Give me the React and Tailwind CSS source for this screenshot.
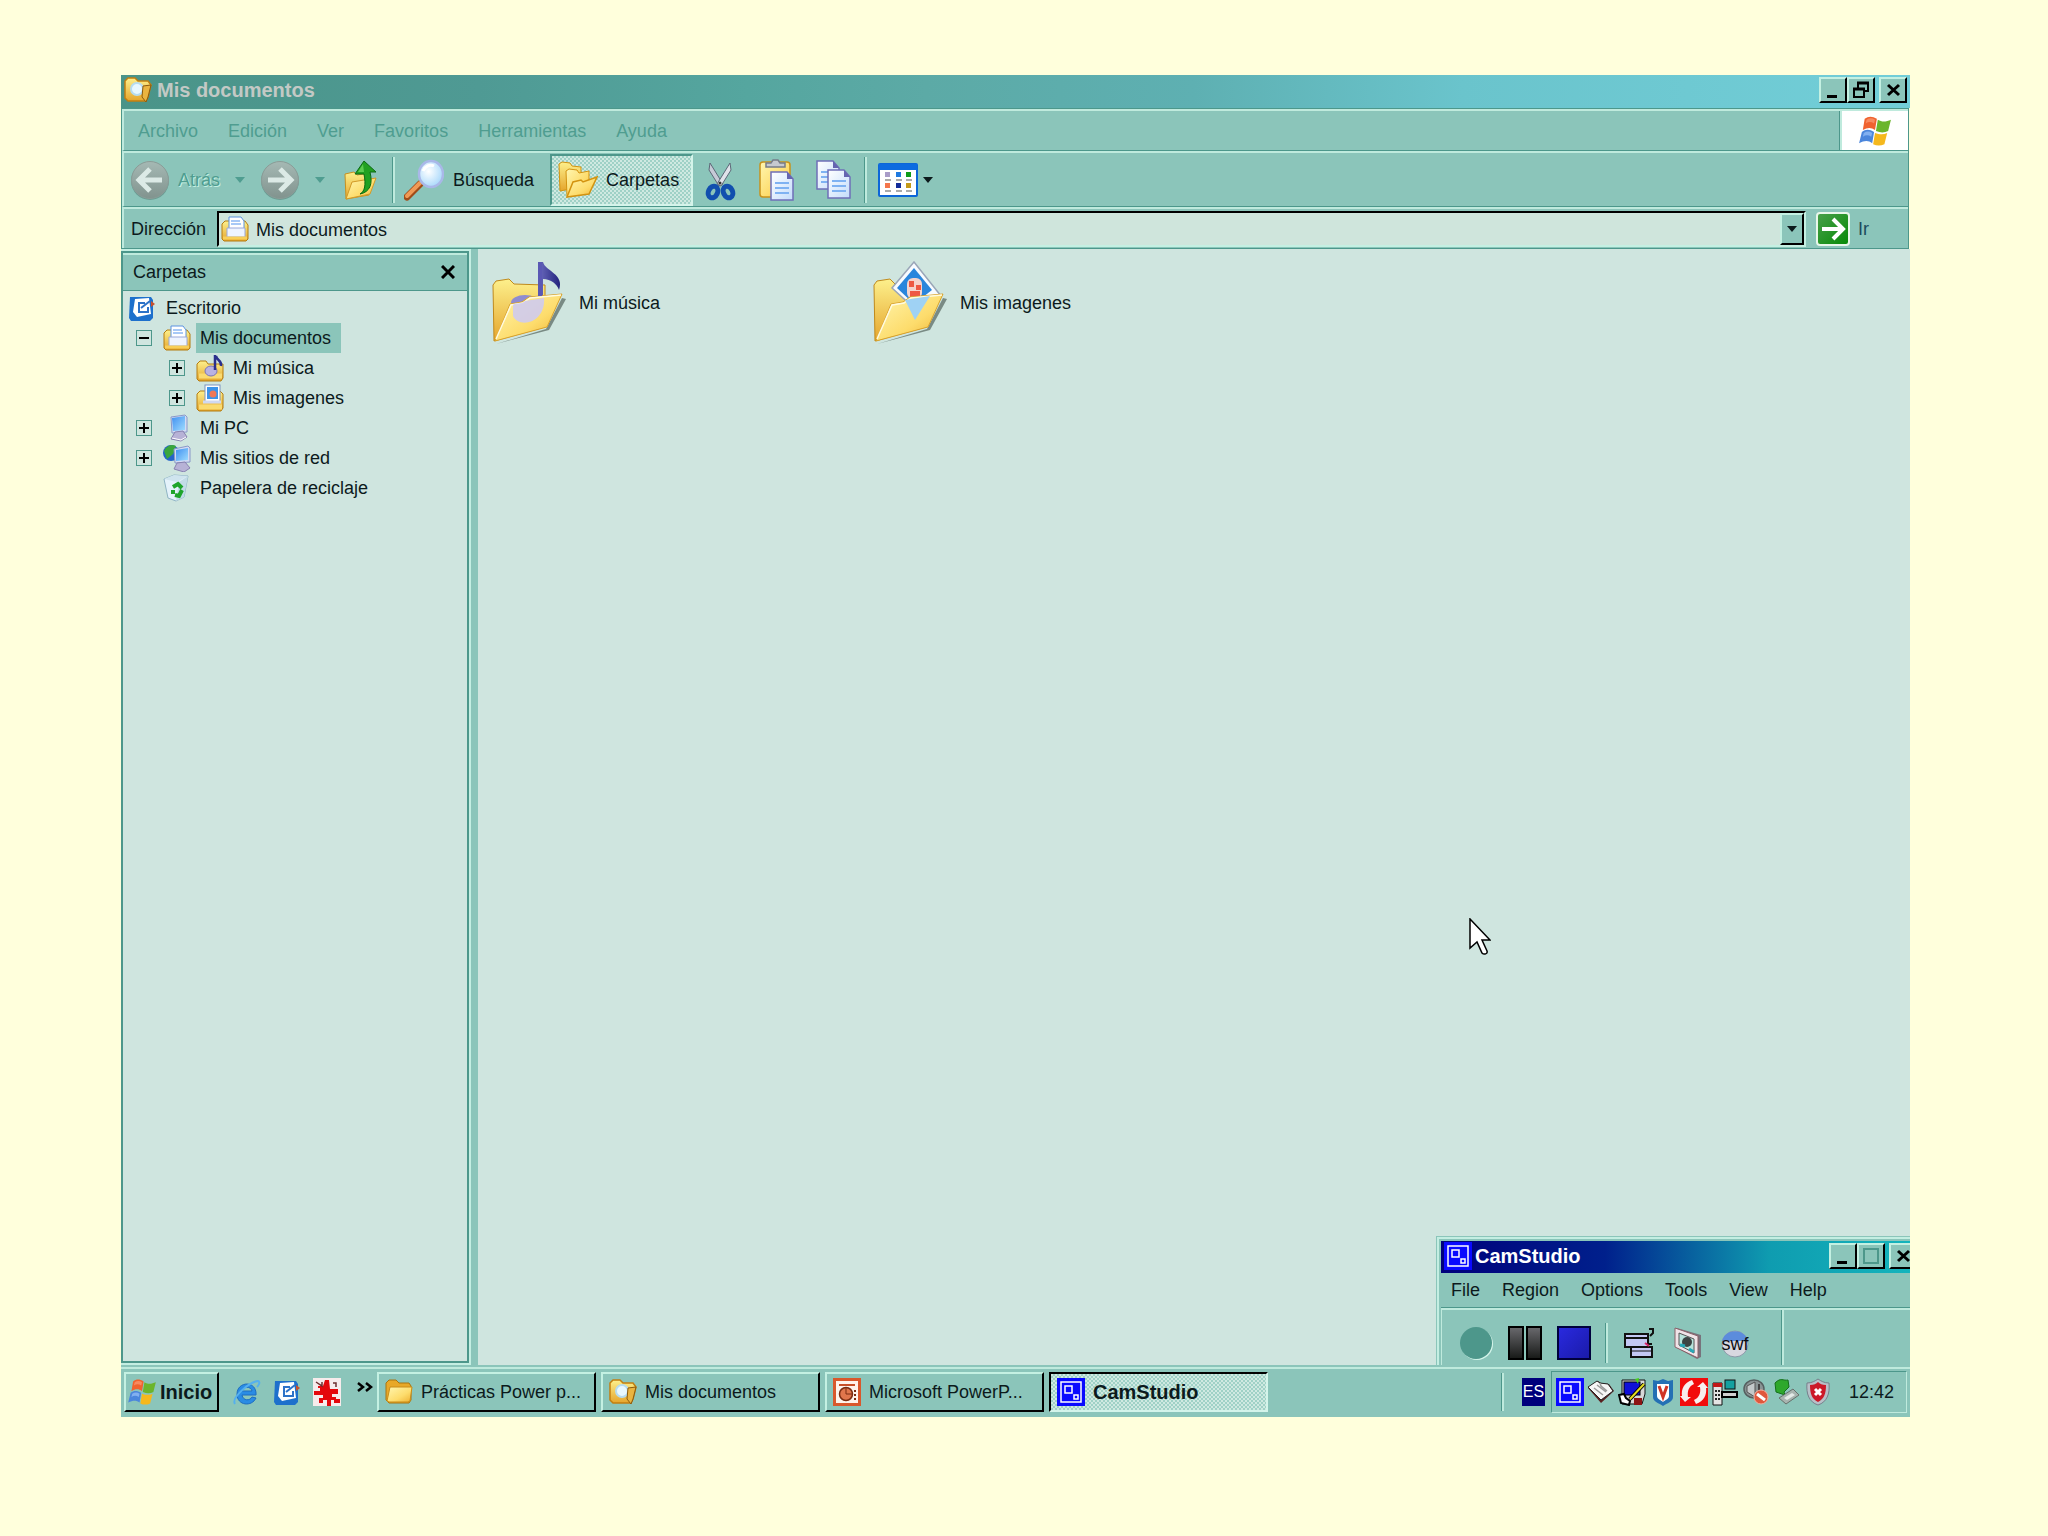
import React, { useState } from "react";

// Shared paint used by every icon on the page
const SharedDefs = () => (
  <svg width="0" height="0" className="absolute" aria-hidden="true">
    <defs>
      <linearGradient id="folder" x1="0" y1="0" x2="1" y2="1">
        <stop offset="0" stopColor="#fff6b0" />
        <stop offset="0.6" stopColor="#fddc6c" />
        <stop offset="1" stopColor="#eeb030" />
      </linearGradient>
      <linearGradient id="folderBack" x1="0" y1="0" x2="0" y2="1">
        <stop offset="0" stopColor="#fdf08c" />
        <stop offset="1" stopColor="#e5a52c" />
      </linearGradient>
      <linearGradient id="screen" x1="0" y1="0" x2="1" y2="1">
        <stop offset="0" stopColor="#3f8ff0" />
        <stop offset="1" stopColor="#9fdcff" />
      </linearGradient>
      <linearGradient id="paper" x1="0" y1="0" x2="1" y2="1">
        <stop offset="0" stopColor="#ffffff" />
        <stop offset="1" stopColor="#c3dcfb" />
      </linearGradient>
      <linearGradient id="grey" x1="0" y1="0" x2="0" y2="1">
        <stop offset="0" stopColor="#a5b9b4" />
        <stop offset="1" stopColor="#81938e" />
      </linearGradient>
      <linearGradient id="go" x1="0" y1="0" x2="1" y2="1">
        <stop offset="0" stopColor="#4aa04c" />
        <stop offset="1" stopColor="#058a05" />
      </linearGradient>
      <linearGradient id="pause" x1="0" y1="0" x2="0" y2="1">
        <stop offset="0" stopColor="#6a6a6e" />
        <stop offset="1" stopColor="#161816" />
      </linearGradient>
      <linearGradient id="stop" x1="0" y1="0" x2="1" y2="1">
        <stop offset="0" stopColor="#2a2ae0" />
        <stop offset="1" stopColor="#1a1aa8" />
      </linearGradient>
      <radialGradient id="lens" cx="0.4" cy="0.4" r="0.7">
        <stop offset="0" stopColor="#ffffff" />
        <stop offset="1" stopColor="#9fd4fa" />
      </radialGradient>
      <linearGradient id="note" x1="0" y1="0" x2="1" y2="0">
        <stop offset="0" stopColor="#6c6cc0" />
        <stop offset="1" stopColor="#23237c" />
      </linearGradient>
    </defs>
  </svg>
);

const Flag = ({ className }) => (
  <svg viewBox="0 0 34 32" className={className}>
    <path d="M6 3c4-3 8-3 13 0l-2 12c-4-3-8-3-13 0z" fill="#f0622f" />
    <path d="M20 4c5 3 9 2 14 0l-3 12c-4 2-8 2-13 0z" fill="#6bb52c" />
    <path d="M3 17c4-3 8-3 13 0l-2 12C10 26 6 26 0 29z" fill="#4b86dc" />
    <path d="M17 18c5 2 9 2 13 0l-3 12c-4 2-8 2-12 0z" fill="#f5b81d" />
    <path d="M8 4c3-2 6-2 9 0l-1 4c-3-2-6-2-9 0z" fill="#f78a60" />
    <path d="M5 18c3-2 6-2 9 0l-1 4c-3-2-6-2-9 0z" fill="#82b0f0" />
  </svg>
);

const NavCircle = ({ back }) => (
  <svg viewBox="0 0 40 40" className="size-10">
    <circle cx="20" cy="21" r="19" fill="#6d9c93" />
    <circle cx="20" cy="20" r="18.5" fill="url(#grey)" stroke="#8b9c97" />
    <path
      d={back ? "M32 20H10M20 9L9 20l11 11" : "M8 20h22M20 9l11 11-11 11"}
      fill="none"
      stroke="#dceae6"
      strokeWidth="5"
    />
  </svg>
);

const Caret = ({ className }) => (
  <svg viewBox="0 0 12 8" className={className}>
    <path d="M1 1h10L6 7z" fill="currentColor" />
  </svg>
);

const FolderUp = () => (
  <svg viewBox="0 0 34 42" className="h-[42px] w-[34px]">
    <path d="M1 15l9-2 3 3 12-2v22L2 40z" fill="url(#folderBack)" stroke="#c89020" />
    <path d="M2 40l6-17 24-4-6 16z" fill="url(#folder)" stroke="#d29a28" />
    <path d="M16 35c5-3 6-9 4-20h-9L20 2l12 11h-6c3 12 0 20-10 22z" fill="#21a121" stroke="#0b6b12" />
    <path d="M19 5l-5 8h6z" fill="#5ccc50" />
  </svg>
);

const SearchIcon = () => (
  <svg viewBox="0 0 40 42" className="h-[42px] w-10">
    <path d="M3 38L16 25" stroke="#a04c18" strokeWidth="7" strokeLinecap="round" />
    <path d="M3 37L16 24" stroke="#f09a55" strokeWidth="4" strokeLinecap="round" />
    <ellipse cx="27" cy="15" rx="12" ry="13" fill="url(#lens)" stroke="#a9b8e8" strokeWidth="2.5" />
    <path d="M19 12c2-5 7-7 11-5" stroke="#fff" strokeWidth="3" fill="none" />
  </svg>
);

const FoldersIcon = () => (
  <svg viewBox="0 0 40 38" className="h-[38px] w-10">
    <path d="M1 3l3-2 8 1 2 3 9 1v20L2 30z" fill="url(#folderBack)" stroke="#d39310" />
    <path d="M8 10l3-2 8 1 2 3 10-2v20L9 35z" fill="url(#folder)" stroke="#d39310" />
    <path d="M9 36l6-15 8-2 2 2 14-5-8 17z" fill="url(#folder)" stroke="#d39310" strokeWidth="1.5" />
  </svg>
);

const CutIcon = () => (
  <svg viewBox="0 0 38 42" className="h-[42px] w-[38px]">
    <path d="M9 4l13 21-4 2L8 11z" fill="#c6cad6" stroke="#5d6878" />
    <path d="M29 4L16 25l4 2 10-16z" fill="#e0e3ea" stroke="#5d6878" />
    <ellipse cx="12" cy="33" rx="4.5" ry="6" transform="rotate(25 12 33)" fill="none" stroke="#114fae" strokeWidth="5" />
    <ellipse cx="27" cy="33" rx="4.5" ry="6" transform="rotate(-25 27 33)" fill="none" stroke="#114fae" strokeWidth="5" />
    <circle cx="19" cy="24" r="1.5" fill="#333" />
  </svg>
);

const Sheet = ({ x, y }) => (
  <g transform={`translate(${x} ${y})`}>
    <path d="M1 1h16l6 7v21H1z" fill="url(#paper)" stroke="#6f6fb8" strokeWidth="1.5" />
    <path d="M17 1v7h6z" fill="#6565b0" />
    <path d="M5 12h14M5 17h14M5 22h14" stroke="#7fb2f2" strokeWidth="2" />
  </g>
);

const PasteIcon = () => (
  <svg viewBox="0 0 38 42" className="h-[42px] w-[38px]">
    <rect x="2" y="3" width="30" height="35" rx="3" fill="url(#folder)" stroke="#c8921c" strokeWidth="1.5" />
    <path d="M8 8V4h5l2-3h5l2 3h5v4z" fill="#c6c9cf" stroke="#777c88" strokeWidth="1.5" />
    <Sheet x={12} y={12} />
  </svg>
);

const CopyIcon = () => (
  <svg viewBox="0 0 38 42" className="h-[42px] w-[38px]">
    <Sheet x={1} y={1} />
    <Sheet x={12} y={10} />
  </svg>
);

const ViewsIcon = () => (
  <svg viewBox="0 0 40 34" className="h-[34px] w-10">
    <rect x="1" y="1" width="38" height="32" rx="1" fill="#fff" stroke="#0c66d8" strokeWidth="2" />
    <rect x="1" y="1" width="38" height="6" fill="#0d6be0" />
    <rect x="7" y="9" width="5" height="5" fill="#a99cc8" />
    <rect x="18" y="9" width="5" height="5" fill="#1f7ae0" />
    <rect x="28" y="9" width="5" height="5" fill="#0f9c18" />
    <rect x="7" y="20" width="5" height="5" fill="#f4764c" />
    <rect x="18" y="20" width="5" height="5" fill="#132c9a" />
    <rect x="28" y="20" width="5" height="5" fill="#c49a18" />
    <path d="M7 17h6M18 17h6M28 17h6M7 28h6M18 28h6M28 28h6" stroke="#aaa" strokeWidth="2" />
  </svg>
);

const GoIcon = () => (
  <svg viewBox="0 0 34 34" className="size-[34px]">
    <rect x="1" y="1" width="32" height="32" rx="3" fill="url(#go)" stroke="#e8f6ea" strokeWidth="2" />
    <path d="M6 17h20M17 7l10 10-10 10" fill="none" stroke="#fff" strokeWidth="4" />
  </svg>
);

const DocsIcon = ({ className }) => (
  <svg viewBox="0 0 28 26" className={className}>
    <path d="M1 8l3-3h20l3 4v14l-2 2H3l-2-2z" fill="url(#folderBack)" stroke="#b47c10" />
    <path d="M8 1h12l3 4v12H8z" fill="#fff" stroke="#5b92e0" />
    <path d="M10 5h9M10 8h10" stroke="#8cb8f4" strokeWidth="1.5" />
    <path d="M6 12h18v9H6z" fill="#eef4ff" stroke="#9aa8d8" />
    <path d="M2 22h24" stroke="#f8cf58" strokeWidth="3" />
  </svg>
);

const DesktopIcon = ({ className }) => (
  <svg viewBox="0 0 28 26" className={className}>
    <path d="M2 2h21l2 3v18l-3 3H3l-2-3z" fill="#1d70cc" />
    <path d="M7 4l14-1 2 16-14 3-4-5z" fill="#fff" />
    <path d="M17 8h-6v9h9v-5M13 13l9-7" fill="none" stroke="#2c72c8" strokeWidth="2" />
    <path d="M23 6l4 3-4 3z" fill="#c8502c" />
  </svg>
);

const SmallMusic = () => (
  <svg viewBox="0 0 28 28" className="h-7 w-7">
    <path d="M1 10l3-3h6l2 3h15v14l-2 3H3l-2-2z" fill="url(#folderBack)" stroke="#b47c10" />
    <path d="M3 22h23" stroke="#fadb70" strokeWidth="5" />
    <ellipse cx="15" cy="17" rx="6" ry="5" fill="#b9b2e2" stroke="#7a74b8" />
    <path d="M19 1v15M20 2c1 5 6 4 5 10" stroke="#2b2f8c" strokeWidth="2.5" fill="none" />
  </svg>
);

const SmallImages = () => (
  <svg viewBox="0 0 28 28" className="h-7 w-7">
    <path d="M1 10l3-3h20l3 3v14l-2 3H3l-2-2z" fill="url(#folderBack)" stroke="#b47c10" />
    <rect x="9" y="1" width="15" height="17" fill="#fff" stroke="#7d93c0" />
    <rect x="11" y="3" width="11" height="12" fill="#3b94ea" />
    <circle cx="17" cy="10" r="3.5" fill="#f07858" />
    <path d="M7 18h18" stroke="#d0d8f0" strokeWidth="3" />
    <path d="M3 23h23" stroke="#fadb70" strokeWidth="5" />
  </svg>
);

const PcIcon = () => (
  <svg viewBox="0 0 28 28" className="h-7 w-7">
    <path d="M8 3l14-2 2 2v15l-15 1z" fill="#d4dcf4" stroke="#8a98c8" />
    <path d="M9 4l13-2v14l-12 1z" fill="url(#screen)" />
    <path d="M12 18l8-1 4 6-6 4-10-2z" fill="#b7b2d6" stroke="#8882b0" />
    <path d="M9 24l9 2 5-3" stroke="#fff" fill="none" />
  </svg>
);

const NetworkIcon = () => (
  <svg viewBox="0 0 28 28" className="h-7 w-7">
    <circle cx="8" cy="9" r="8" fill="#2464c8" />
    <path d="M1 7c3-6 8-7 12-5l-3 8-6 5z" fill="#3aa63c" />
    <path d="M11 5l14-3 2 2v14l-15 1z" fill="#d4dcf4" stroke="#8a98c8" />
    <path d="M13 6l12-2v12l-12 1z" fill="url(#screen)" />
    <path d="M14 19l8-1 5 6-6 4-10-3z" fill="#b7b2d6" stroke="#8882b0" />
  </svg>
);

const BinIcon = () => (
  <svg viewBox="0 0 28 28" className="h-7 w-7">
    <path d="M1 5l10-4 14 1-4 21-8 4-8-3z" fill="#e4f2fa" stroke="#8fb4c4" />
    <path d="M1 5l13 3 11-6-14-1z" fill="#cfe4ee" />
    <path d="M16 8l9-6-4 21-8 4z" fill="#c2dce6" />
    <path d="M10 13l5-3 4 4M19 16l-3 6-4-1M10 20v-4" stroke="#1fa52a" strokeWidth="4" fill="none" />
  </svg>
);

const BigFolder = ({ children, overlay }) => (
  <svg viewBox="0 0 76 84" className="h-[84px] w-[76px]">
    <path d="M5 83l53-14L75 38l-4-1-16 31z" fill="#54645c" opacity="0.7" />
    <path d="M2 24l3-4 13-2 5 5 31 1v42L3 80z" fill="url(#folderBack)" stroke="#c08a1c" />
    {children}
    <path d="M4 80l15-37 12-2 7-5 33-3-15 33z" fill="url(#folder)" stroke="#d8a22c" />
    <path d="M5 78l15-34 12-2 7-5 31-3" fill="none" stroke="#fffbe0" strokeWidth="1.5" />
    {overlay}
  </svg>
);

const MusicFolder = () => (
  <BigFolder
    overlay={
      <>
        <path d="M22 44c2-3 8 0 12-4l19-3c2 25-25 31-31 18z" fill="#cfcbee" opacity="0.9" />
        <path d="M47 1h4v34h-4z" fill="#5a58b4" />
      </>
    }
  >
    <ellipse cx="34" cy="42" rx="14" ry="8" fill="#8f8cd0" />
    <path d="M47 1h5c2 9 22 12 16 28-2-6-8-11-16-11v18h-5z" fill="url(#note)" />
  </BigFolder>
);

const ImagesFolder = () => (
  <BigFolder overlay={<path d="M33 39l25-4-15 24z" fill="#9fd2f4" />}>
    <path d="M42 1l27 34-27 12-22-20z" fill="#f8fbff" stroke="#9aa6b8" strokeWidth="1.5" />
    <path d="M42 7l18 22-18 14-17-16z" fill="#2a86dc" />
    <rect x="35" y="17" width="15" height="21" rx="6" fill="#f6d4cc" />
    <path d="M37 20h5v6h-5zM44 24h5v5h-5zM38 30h10v7H38z" fill="#ee5a44" />
  </BigFolder>
);

const SearchFolder = ({ className }) => (
  <svg viewBox="0 0 28 26" className={className}>
    <path d="M1 4l3-3h7l3 3h10l3 4-3 12-2 4H4l-3-3z" fill="url(#folderBack)" stroke="#c27f10" strokeWidth="1.5" />
    <circle cx="13" cy="12" r="6" fill="#e8f8ff" stroke="#b6dcf0" strokeWidth="2" />
    <path d="M19 9l8-1-3 12-2 5-4-5z" fill="#eab440" stroke="#8c5a0c" />
  </svg>
);

const PlainFolder = () => (
  <svg viewBox="0 0 28 26" className="h-[26px] w-7">
    <path d="M1 4l3-3h7l3 3h10l2 3v14l-2 3H4l-3-3z" fill="#e8a828" stroke="#a87410" />
    <path d="M2 22l3-14h22l-2 14-2 1H4z" fill="url(#folder)" stroke="#c88c18" />
  </svg>
);

const PowerPointIcon = () => (
  <svg viewBox="0 0 28 28" className="size-7">
    <rect width="28" height="28" fill="#d9582c" />
    <rect x="3" y="3" width="22" height="22" fill="#fff4ec" />
    <path d="M6 7h16" stroke="#c85028" strokeWidth="2" />
    <circle cx="13" cy="16" r="6.5" fill="#e0764c" stroke="#7a2c10" strokeWidth="1.5" />
    <path d="M13 10v6h6" stroke="#7a2c10" fill="none" />
    <path d="M22 12v2M22 16v2M22 20v2" stroke="#7a2c10" strokeWidth="2" />
  </svg>
);

const CamIcon = ({ className }) => (
  <svg viewBox="0 0 28 28" className={className}>
    <rect width="28" height="28" fill="#0a0aff" />
    <rect x="4" y="4" width="20" height="20" fill="none" stroke="#fff" strokeWidth="1.5" />
    <rect x="8" y="8" width="7" height="7" fill="none" stroke="#fff" strokeWidth="1.5" />
    <rect x="17" y="17" width="4" height="4" fill="none" stroke="#fff" strokeWidth="1.5" />
  </svg>
);

const IeIcon = () => (
  <svg viewBox="0 0 28 28" className="size-7">
    <path d="M23 17H9c1 6 8 6 10 2l4 1c-4 9-19 8-19-4C4 3 24 2 23 17zM9 13h10c-1-5-9-5-10 0z" fill="#2a8ce4" stroke="#1c6cc0" />
    <path d="M2 26C-2 20 16 4 25 3c3 1 0 5-1 6" fill="none" stroke="#55b0ee" strokeWidth="2" />
  </svg>
);

const SplatIcon = () => (
  <svg viewBox="0 0 28 28" className="size-7">
    <rect width="28" height="28" fill="#f6ecec" />
    <path d="M12 2h4l1 9h8v5h-6v3h4v2h4v4h-6v-3h-3v6h-4v-6h-4v3H6v-5h4v-3H1v-4h6v-3H5V8h5z" fill="#e4080c" />
    <path d="M3 4l6 4V4M20 5h3v4" fill="none" stroke="#6c3030" strokeWidth="1.5" />
  </svg>
);

const trayIcons = [
  { name: "CamStudio", icon: <CamIcon className="size-7" /> },
  {
    name: "Diccionario",
    icon: (
      <svg viewBox="0 0 28 28" className="size-7">
        <path d="M1 10l10-7 3 2 8 1 5 7-13 12z" fill="#5a2020" />
        <path d="M1 9l9-6 3 2 8 1 5 7-12 9z" fill="#f6f6f6" stroke="#222" />
        <path d="M7 10l9 7M10 7l9 7M13 5l1 3 6 5" stroke="#999" strokeWidth="1.5" fill="none" />
      </svg>
    ),
  },
  {
    name: "Pantalla",
    icon: (
      <svg viewBox="0 0 28 28" className="size-7">
        <path d="M4 2h23v14l-3 10H4z" fill="#d8d8d8" stroke="#111" />
        <rect x="6" y="4" width="16" height="13" fill="#1010d8" stroke="#000" />
        <path d="M16 20h8v7h-8z" fill="#8c1414" />
        <path d="M1 17l5-1 2 4 4 3-1 4-8-2z" fill="#fff" stroke="#000" strokeWidth="2" />
        <path d="M12 21L26 6" stroke="#000" strokeWidth="4" />
        <path d="M12 21L26 6" stroke="#e6dc20" strokeWidth="2" />
        <path d="M17 1l3 5 1-6" fill="#48d018" />
      </svg>
    ),
  },
  {
    name: "Antivirus",
    icon: (
      <svg viewBox="0 0 28 28" className="size-7">
        <path d="M4 2l5 1 5-2 5 2 5-1v17c0 5-6 6-10 9C10 25 4 24 4 19z" fill="#2470b4" />
        <path d="M8 6h12v12c0 3-4 4-6 6-2-2-6-3-6-6z" fill="#fff" />
        <path d="M10 8l4 11 4-11" fill="none" stroke="#d03424" strokeWidth="3" />
      </svg>
    ),
  },
  {
    name: "Sincronizar",
    icon: (
      <svg viewBox="0 0 28 28" className="size-7">
        <rect width="28" height="28" fill="#f20c0c" />
        <path d="M12 2C4 5 1 11 2 18H0l5 6 6-5H8c-1-6 1-11 6-13zM16 26c8-3 11-9 10-16h2l-5-6-6 5h3c1 6-1 11-6 13z" fill="#f8efef" />
      </svg>
    ),
  },
  {
    name: "Equipo",
    icon: (
      <svg viewBox="0 0 28 28" className="size-7">
        <path d="M2 5h9v22H2z" fill="#e4e4e4" stroke="#111" />
        <path d="M2 5h9v4H2z" fill="#c01818" />
        <path d="M4 13h5M4 17h5M4 21h5" stroke="#222" strokeWidth="2" strokeDasharray="2 1" />
        <rect x="14" y="2" width="10" height="9" fill="#14a0a0" stroke="#111" />
        <path d="M11 14h15v5H11z" fill="#d0d0d0" stroke="#000" strokeWidth="2" />
      </svg>
    ),
  },
  {
    name: "Volumen",
    icon: (
      <svg viewBox="0 0 28 28" className="size-7">
        <ellipse cx="12" cy="11" rx="10" ry="9" fill="#8a9494" stroke="#566060" strokeWidth="1.5" />
        <path d="M5 8l8-4v15l-8-5z" fill="#c4caca" stroke="#555" />
        <path d="M17 6v10" stroke="#444" strokeWidth="2" />
        <circle cx="19" cy="19" r="7" fill="#e0583c" stroke="#f2b0a0" />
        <path d="M15 16l8 6" stroke="#fff" strokeWidth="3" />
      </svg>
    ),
  },
  {
    name: "Quitar hardware",
    icon: (
      <svg viewBox="0 0 28 28" className="size-7">
        <path d="M2 5C8-1 10 3 15 2l1 7-5 5 1 3-9-3z" fill="#2ea82c" stroke="#15701c" />
        <path d="M6 20l14-9 6 6-13 9z" fill="#a9b4b0" stroke="#66706c" />
        <path d="M11 20l8-5 3 2-8 5z" fill="#e4eae8" />
      </svg>
    ),
  },
  {
    name: "Seguridad",
    icon: (
      <svg viewBox="0 0 28 28" className="size-7">
        <path d="M3 5c5 0 8-2 11-4 3 2 6 4 11 4 1 11-2 19-11 22C5 24 2 16 3 5z" fill="#b9c0c8" stroke="#77808c" />
        <path d="M6 7c4 0 6-1 8-3 2 2 4 3 8 3 0 9-2 14-8 17C8 21 6 16 6 7z" fill="#cc1828" />
        <path d="M11 11l6 6M17 11l-6 6" stroke="#fff" strokeWidth="3" />
      </svg>
    ),
  },
];

const tree = [
  { label: "Escritorio", indent: "pl-[5px]", icon: <DesktopIcon className="h-[26px] w-7" />, root: true },
  { label: "Mis documentos", indent: "pl-[13px]", sign: "−", icon: <DocsIcon className="h-[26px] w-7" />, selected: true },
  { label: "Mi música", indent: "pl-[46px]", sign: "+", icon: <SmallMusic /> },
  { label: "Mis imagenes", indent: "pl-[46px]", sign: "+", icon: <SmallImages /> },
  { label: "Mi PC", indent: "pl-[13px]", sign: "+", icon: <PcIcon /> },
  { label: "Mis sitios de red", indent: "pl-[13px]", sign: "+", icon: <NetworkIcon /> },
  { label: "Papelera de reciclaje", indent: "pl-[40px]", icon: <BinIcon /> },
];

const tasks = [
  { label: "Prácticas Power p...", icon: <PlainFolder /> },
  { label: "Mis documentos", icon: <SearchFolder className="h-[26px] w-7" /> },
  { label: "Microsoft PowerP...", icon: <PowerPointIcon /> },
  { label: "CamStudio", icon: <CamIcon className="size-7" />, active: true },
];

const raised =
  "border-2 border-t-[#c4f0e2] border-l-[#c4f0e2] border-r-black border-b-black bg-[#8bc5ba]";

const dither =
  "bg-[conic-gradient(#9fd1c6_25%,#cfe9e1_0_50%,#9fd1c6_0_75%,#cfe9e1_0)] bg-[length:4px_4px]";

const WindowButton = ({ label, children }) => (
  <button type="button" aria-label={label} className={`flex h-[26px] w-7 shrink-0 items-center justify-center ${raised}`}>
    <svg viewBox="0 0 20 20" className="size-5">
      {children}
    </svg>
  </button>
);

const minimize = <path d="M4 15h10v3H4z" fill="#000" />;
const close = <path d="M5 5l11 10M16 5L5 15" stroke="#000" strokeWidth="3" />;

const Separator = ({ className }) => (
  <div className={`w-[3px] border-l border-l-[#4d978b] border-r-2 border-r-[#bfeadd] ${className}`} />
);

const TreeItem = ({ item }) => (
  <li className={`flex h-[30px] items-center ${item.indent}`}>
    {item.sign && (
      <button
        type="button"
        aria-label={item.sign === "+" ? "Expandir" : "Contraer"}
        className="mr-[11px] flex size-4 items-center justify-center border border-[#4d978b]"
      >
        <svg viewBox="0 0 10 10" className="size-[10px]">
          <path d={item.sign === "+" ? "M0 5h10M5 0v10" : "M0 5h10"} stroke="#000" strokeWidth="2" />
        </svg>
      </button>
    )}
    {item.icon}
    <a
      href="#"
      className={`flex h-[30px] items-center pr-[10px] whitespace-nowrap ${item.root ? "pl-[10px]" : "ml-[5px] pl-1"} ${
        item.selected ? "bg-[#8bc5ba]" : ""
      }`}
    >
      {item.label}
    </a>
  </li>
);

const CamStudio = () => (
  <section className="absolute right-0 bottom-0 flex h-[129px] w-[474px] flex-col overflow-hidden border-t border-l border-[#8bc5ba] bg-[#8bc5ba]">
    <div className="flex flex-1 flex-col border-t-2 border-l-2 border-[#c4eee2] pt-[2px] pl-[2px]">
      <div className="flex h-8 shrink-0 items-center bg-[linear-gradient(90deg,#00007c_0%,#00208c_35%,#0f9cb0_70%,#14b4bc_100%)] pb-[2px] pl-[3px]">
        <CamIcon className="size-7 shrink-0" />
        <h2 className="ml-[3px] flex-1 text-[20px] font-bold text-white">CamStudio</h2>
        <WindowButton label="Minimizar">{minimize}</WindowButton>
        <WindowButton label="Maximizar">
          <rect x="3" y="3" width="14" height="14" fill="none" stroke="#4d978b" strokeWidth="2" />
        </WindowButton>
        <div className="-mr-[7px] pl-[4px]">
          <WindowButton label="Cerrar">{close}</WindowButton>
        </div>
      </div>
      <nav className="flex h-[35px] shrink-0 items-center gap-[22px] border-b border-[#4d978b] pl-[10px]">
        {["File", "Region", "Options", "Tools", "View", "Help"].map((item) => (
          <button key={item} type="button">
            {item}
          </button>
        ))}
      </nav>
      <div className="flex flex-1 border-t-2 border-l border-[#bfeadd]">
        <div className="flex flex-1 items-center pt-[10px] pl-[17px]">
          <button type="button" aria-label="Record" className="size-[34px]">
            <svg viewBox="0 0 34 34">
              <circle cx="18" cy="18" r="16" fill="#d4f4ea" />
              <circle cx="17" cy="17" r="16" fill="#4d978b" />
            </svg>
          </button>
          <button type="button" aria-label="Pause" className="ml-[15px] size-[34px]">
            <svg viewBox="0 0 34 34">
              <rect x="1" y="1" width="14" height="32" fill="url(#pause)" stroke="#000" strokeWidth="2" />
              <rect x="19" y="1" width="14" height="32" fill="url(#pause)" stroke="#000" strokeWidth="2" />
            </svg>
          </button>
          <button type="button" aria-label="Stop" className="ml-[15px] size-[34px]">
            <svg viewBox="0 0 34 34">
              <rect x="1" y="1" width="32" height="32" fill="url(#stop)" stroke="#00003c" strokeWidth="2" />
            </svg>
          </button>
          <Separator className="ml-[14px] h-10" />
          <button type="button" aria-label="Record to AVI" className="ml-[15px] h-8 w-8">
            <svg viewBox="0 0 32 32">
              <rect x="2" y="7" width="23" height="13" fill="#c4c8f4" stroke="#111" strokeWidth="2" />
              <path d="M2 11h23" stroke="#111" strokeWidth="2" />
              <rect x="8" y="20" width="21" height="10" fill="#c4c8f4" stroke="#111" strokeWidth="2" />
              <path d="M9 24h20" stroke="#111" />
              <path d="M23 17h6M26 2h4v4l-3 3" stroke="#111" strokeWidth="2" fill="none" />
              <path d="M22 16l4 3" stroke="#d8286c" strokeWidth="2" />
            </svg>
          </button>
          <button type="button" aria-label="Annotation" className="ml-[18px] h-8 w-8">
            <svg viewBox="0 0 32 32">
              <path d="M4 1l24 7v22l-4 2L4 21z" fill="#77737c" />
              <path d="M2 1l23 8v22L2 20z" fill="#f0e4e8" stroke="#8a6068" />
              <path d="M6 6l15 6v14L6 18z" fill="#b8e4dc" stroke="#555" />
              <circle cx="14" cy="15" r="5" fill="#3c4444" />
              <path d="M7 18l5 1M16 22l5 3" stroke="#28a8b8" strokeWidth="3" />
            </svg>
          </button>
          <button type="button" aria-label="SWF" className="ml-[14px] h-8 w-8">
            <svg viewBox="0 0 32 32">
              <circle cx="16" cy="17" r="13" fill="#d8d8e0" stroke="#8a98a8" />
              <path d="M3 14C6 1 26 1 29 14z" fill="#5c8cdc" />
              <text x="16" y="23" fontSize="18" textAnchor="middle" fill="#0c0c10">
                swf
              </text>
            </svg>
          </button>
        </div>
        <Separator className="h-full" />
        <div className="w-[126px]" />
      </div>
    </div>
  </section>
);

const Explorer = () => {
  const [address, setAddress] = useState("Mis documentos");

  return (
    <>
      <header className="flex h-[33px] shrink-0 items-center bg-[linear-gradient(90deg,#4a9488_0%,#4f9a94_20%,#55a69f_35%,#5caaa6_45%,#5eb0b2_60%,#6ac4cc_75%,#72ced8_100%)] pr-[3px] pb-[3px] pl-[3px]">
        <SearchFolder className="h-[26px] w-7" />
        <h1 className="ml-[5px] flex-1 text-[20px] font-bold text-[#c3c9c5]">Mis documentos</h1>
        <WindowButton label="Minimizar">{minimize}</WindowButton>
        <WindowButton label="Restaurar">
          <rect x="7" y="3" width="10" height="8" fill="none" stroke="#000" strokeWidth="2" />
          <path d="M6 3h12" stroke="#000" strokeWidth="3" />
          <rect x="3" y="9" width="10" height="8" fill="#8bc5ba" stroke="#000" strokeWidth="2" />
          <path d="M2 9h12" stroke="#000" strokeWidth="3" />
        </WindowButton>
        <div className="pl-[4px]">
          <WindowButton label="Cerrar">{close}</WindowButton>
        </div>
      </header>

      <div className="mr-px border border-[#4d978b] bg-[#8bc5ba]">
        {/* Menu bar */}
        <div className="flex h-[42px] items-stretch border-t-2 border-b border-l-2 border-t-[#bfeadd] border-b-[#4d978b] border-l-[#bfeadd]">
          <nav className="flex flex-1 items-center gap-[30px] pl-[14px] text-[#4f9d90]">
            {["Archivo", "Edición", "Ver", "Favoritos", "Herramientas", "Ayuda"].map((item) => (
              <button key={item} type="button">
                {item}
              </button>
            ))}
          </nav>
          <Separator className="h-full" />
          <div className="flex w-[66px] items-center justify-center bg-white">
            <Flag className="h-[30px] w-[34px]" />
          </div>
        </div>

        {/* Toolbar */}
        <div className="flex h-[56px] items-center border-t-2 border-b border-l-2 border-t-[#bfeadd] border-b-[#4d978b] border-l-[#bfeadd] pl-[6px]">
          <button type="button" className="flex items-center gap-2 text-[#4f9d90] [text-shadow:1px_1px_#c4f0e2]">
            <NavCircle back />
            Atrás
          </button>
          <Caret className="ml-[14px] h-2 w-3 text-[#4f9d90]" />
          <button type="button" aria-label="Adelante" className="ml-[14px]">
            <NavCircle />
          </button>
          <Caret className="ml-[14px] h-2 w-3 text-[#4f9d90]" />
          <button type="button" aria-label="Arriba" className="ml-[18px]">
            <FolderUp />
          </button>
          <Separator className="ml-[14px] h-[46px]" />
          <button type="button" className="ml-[9px] flex items-center gap-[9px]">
            <SearchIcon />
            Búsqueda
          </button>
          <button
            type="button"
            className={`ml-[16px] flex h-[52px] items-center gap-2 border-2 border-t-[#4d978b] border-r-[#d4f4ea] border-b-[#d4f4ea] border-l-[#4d978b] pr-[12px] pl-[6px] ${dither}`}
          >
            <FoldersIcon />
            Carpetas
          </button>
          <div className="ml-[8px] flex gap-[19px]">
            <button type="button" aria-label="Cortar">
              <CutIcon />
            </button>
            <button type="button" aria-label="Pegar">
              <PasteIcon />
            </button>
            <button type="button" aria-label="Copiar">
              <CopyIcon />
            </button>
          </div>
          <Separator className="ml-[11px] h-[46px]" />
          <button type="button" aria-label="Vistas" className="ml-[11px] flex items-center gap-[4px]">
            <ViewsIcon />
            <Caret className="h-2 w-3" />
          </button>
        </div>

        {/* Address bar */}
        <div className="flex h-[41px] items-center border-t-2 border-l-2 border-[#bfeadd] pl-[7px]">
          <label htmlFor="address">Dirección</label>
          <div className="ml-[11px] flex h-[36px] flex-1 items-center border-2 border-t-black border-r-[#c4f0e2] border-b-[#c4f0e2] border-l-black bg-[#cfe5dc] pl-[2px]">
            <DocsIcon className="h-[28px] w-7" />
            <input
              id="address"
              value={address}
              onChange={(e) => setAddress(e.target.value)}
              className="ml-[7px] min-w-0 flex-1 bg-transparent pt-[2px] outline-none"
            />
            <button type="button" aria-label="Abrir lista" className={`flex h-[32px] w-6 items-center justify-center ${raised}`}>
              <Caret className="h-2 w-3" />
            </button>
          </div>
          <button type="button" className="ml-[10px] flex w-[92px] items-center gap-2 text-[#1c4a5c]">
            <GoIcon />
            Ir
          </button>
        </div>
      </div>
    </>
  );
};

export default function App() {
  return (
    <div className="flex min-h-screen flex-col bg-[#ffffdc] pt-[75px] pr-[138px] pb-[119px] pl-[121px] font-['Liberation_Sans',Arial,sans-serif] text-[18px] leading-6 text-[#0c1a1c]">
      <SharedDefs />
      <div className="flex flex-1 flex-col">
        <Explorer />

        <main className="relative flex flex-1 bg-[#cfe5df]">
          <aside className="flex w-[350px] shrink-0 flex-col bg-[#c4eee2] pt-[2px] pr-[2px] pb-[2px]">
            <div className="flex-1 border-2 border-[#4d978b] bg-[#cfe5df]">
              <div className="flex h-[38px] items-center justify-between border-t-2 border-b border-t-[#bfeadd] border-b-[#4d978b] bg-[#8bc5ba] pr-[12px] pb-[2px] pl-[10px]">
                <h2>Carpetas</h2>
                <button type="button" aria-label="Cerrar panel">
                  <svg viewBox="0 0 14 14" className="size-[14px]">
                    <path d="M1 1l12 12M13 1L1 13" stroke="#000" strokeWidth="3" />
                  </svg>
                </button>
              </div>
              <ul className="pt-[2px]">
                {tree.map((item) => (
                  <TreeItem key={item.label} item={item} />
                ))}
              </ul>
            </div>
          </aside>
          <div className="w-[7px] shrink-0 bg-[#8bc5ba]" />

          <div className="flex flex-1 items-start pt-[12px] pl-[13px]">
            <a href="#" className="flex w-[381px] items-center gap-3">
              <MusicFolder />
              Mi música
            </a>
            <a href="#" className="flex items-center gap-3">
              <ImagesFolder />
              Mis imagenes
            </a>
          </div>

          <svg viewBox="0 0 22 38" className="absolute right-[419px] bottom-[409px] h-[38px] w-[22px]">
            <path d="M1 1v29l7-6 5 11c2 2 6 1 5-2l-5-11h8z" fill="#fff" stroke="#000" strokeWidth="1.5" />
          </svg>
          <CamStudio />
        </main>

        {/* Taskbar */}
        <footer className="flex h-[52px] shrink-0 items-center border-t-2 border-[#8bc5ba] bg-[#8bc5ba]">
          <div className="flex h-full flex-1 items-center border-t-2 border-[#bfeadd] pb-[2px] pl-[3px]">
            <button type="button" className={`flex h-10 w-[95px] shrink-0 items-center gap-[4px] pl-[2px] text-[20px] font-bold ${raised}`}>
              <Flag className="h-[26px] w-7" />
              Inicio
            </button>
            <div className="ml-[14px] flex shrink-0 gap-3">
              <button type="button" aria-label="Internet Explorer">
                <IeIcon />
              </button>
              <button type="button" aria-label="Mostrar escritorio">
                <DesktopIcon className="size-7" />
              </button>
              <button type="button" aria-label="Acceso directo">
                <SplatIcon />
              </button>
            </div>
            <button type="button" aria-label="Más" className="ml-[16px] shrink-0">
              <svg viewBox="0 0 16 24" className="h-6 w-4">
                <path d="M1 3l5 4-5 4M9 3l5 4-5 4" fill="none" stroke="#000" strokeWidth="2.5" />
              </svg>
            </button>
            <div className="ml-[4px] flex flex-1 gap-[5px]">
              {tasks.map((task) => (
                <button
                  key={task.label}
                  type="button"
                  className={`flex h-10 w-[219px] items-center gap-2 pl-[6px] whitespace-nowrap ${
                    task.active
                      ? `border-2 border-t-black border-r-[#d4f4ea] border-b-[#d4f4ea] border-l-black text-[20px] font-bold ${dither}`
                      : raised
                  }`}
                >
                  {task.icon}
                  {task.label}
                </button>
              ))}
            </div>
            <Separator className="h-[38px]" />
            <span className="ml-[18px] flex h-7 w-[23px] shrink-0 items-center justify-center bg-[#00007c] text-base text-white">ES</span>
            <div className="mr-[3px] ml-[6px] flex h-[42px] shrink-0 items-center gap-[3px] border border-t-[#4d978b] border-r-[#bfeadd] border-b-[#bfeadd] border-l-[#4d978b] pr-[12px] pl-[4px]">
              {trayIcons.map((item) => (
                <button key={item.name} type="button" aria-label={item.name}>
                  {item.icon}
                </button>
              ))}
              <time className="ml-[14px]">12:42</time>
            </div>
          </div>
        </footer>
      </div>
    </div>
  );
}
